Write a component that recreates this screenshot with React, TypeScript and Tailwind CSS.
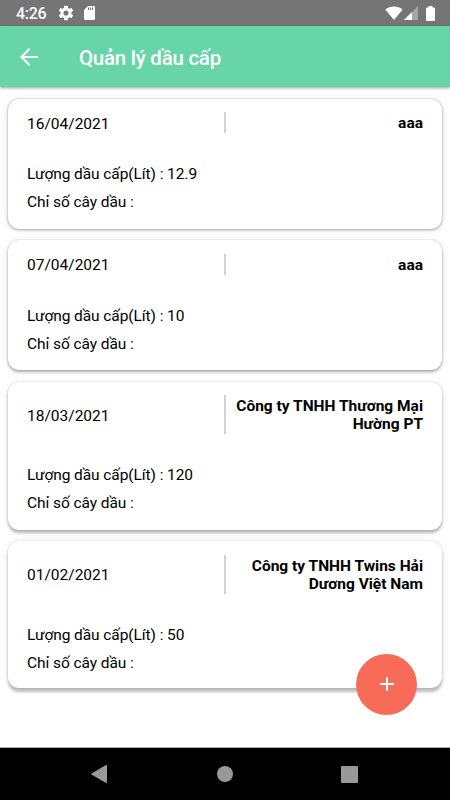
import clsx from 'clsx';

type Refill = {
  date: string;
  company: string;
  liters: string;
  index: string;
  className: string;
};

const refills: Refill[] = [
  { date: '16/04/2021', company: 'aaa', liters: '12.9', index: '', className: 'h-[130px] shadow-[0_0_1px_rgba(0,0,0,0.3),0_1px_3px_rgba(0,0,0,0.3),0_0_8px_rgba(0,0,0,0.08)]' },
  { date: '07/04/2021', company: 'aaa', liters: '10', index: '', className: 'h-[130px] shadow-[0_0_1px_rgba(0,0,0,0.25),0_2px_3px_rgba(0,0,0,0.3),0_0_8px_rgba(0,0,0,0.08)]' },
  { date: '18/03/2021', company: 'Công ty TNHH Thương Mại Hường PT', liters: '120', index: '', className: 'h-[148px] shadow-[0_0_1px_rgba(0,0,0,0.25),0_3px_3px_rgba(0,0,0,0.26),0_0_8px_rgba(0,0,0,0.08)]' },
  { date: '01/02/2021', company: 'Công ty TNHH Twins Hải Dương Việt Nam', liters: '50', index: '', className: 'h-[147px] shadow-[0_0_1px_rgba(0,0,0,0.25),0_4px_3px_rgba(0,0,0,0.24),0_0_8px_rgba(0,0,0,0.08)]' },
];

const StatusBar = () => (
  <div className="flex h-[26px] shrink-0 items-center bg-[#757575] pl-4 pr-[15px] text-white">
    <span className="w-[42px] pt-[2px] text-[16px] font-medium leading-[26px] tracking-[-0.3px]">4:26</span>
    <svg className="h-4 w-4" viewBox="1 1 22 22" fill="currentColor">
      <path d="M19.43 12.98c.04-.32.07-.64.07-.98s-.03-.66-.07-.98l2.11-1.65c.19-.15.24-.42.12-.64l-2-3.46c-.12-.22-.39-.3-.61-.22l-2.49 1c-.52-.4-1.08-.73-1.69-.98l-.38-2.65A.49.49 0 0 0 14 2h-4c-.25 0-.46.18-.49.42l-.38 2.65c-.61.25-1.17.59-1.69.98l-2.49-1c-.23-.09-.49 0-.61.22l-2 3.46c-.13.22-.07.49.12.64l2.11 1.65c-.04.32-.07.65-.07.98s.03.66.07.98l-2.11 1.65c-.19.15-.24.42-.12.64l2 3.46c.12.22.39.3.61.22l2.49-1c.52.4 1.08.73 1.69.98l.38 2.65c.03.24.24.42.49.42h4c.25 0 .46-.18.49-.42l.38-2.65c.61-.25 1.17-.59 1.69-.98l2.49 1c.23.09.49 0 .61-.22l2-3.46c.12-.22.07-.49-.12-.64l-2.11-1.65zM12 15.5A3.5 3.5 0 1 1 12 8.500a3.500 3.500 0 0 1 0 7z" />
    </svg>
    <svg className="ml-[10px] h-[14px] w-[11px]" viewBox="0 0 11 14">
      <path d="M4 0H10a1 1 0 0 1 1 1V13a1 1 0 0 1-1 1H1a1 1 0 0 1-1-1V4z" fill="currentColor" />
      <path d="M4.500 1.500V4M6.500 1.500V4M8.500 1.500V4" stroke="#757575" strokeWidth="1" />
    </svg>
    <div className="ml-auto flex items-center">
      <svg className="h-[14px] w-[18px]" viewBox="0 0 18 14" fill="currentColor">
        <path d="M.3 3.500C5 -.5 13 -.5 17.700 3.500L9 14z" />
      </svg>
      <svg className="ml-[1px] h-[14px] w-[14px]" viewBox="0 0 14 14" fill="currentColor">
        <path d="M14 0V14H0z" opacity=".35" />
        <path d="M8 6V14H0z" />
      </svg>
      <svg className="ml-2 h-[15px] w-[9px]" viewBox="0 0 9 15" fill="currentColor">
        <path d="M2.500 0h4v1.500H8a1 1 0 0 1 1 1V14a1 1 0 0 1-1 1H1a1 1 0 0 1-1-1V2.500a1 1 0 0 1 1-1h1.500z" />
      </svg>
    </div>
  </div>
);

const Header = () => (
  <header className="z-10 flex h-[61px] shrink-0 items-center bg-[#67d5a8] pl-5 text-white shadow-[0_1px_3px_rgba(0,0,0,0.4)]">
    <button aria-label="Back">
      <svg className="h-[18px] w-[18px]" viewBox="0 0 18 18" fill="none" stroke="currentColor" strokeWidth="2">
        <path d="M9.600 .8L1.400 9l8.200 8.200M1.600 9H18" />
      </svg>
    </button>
    <h1 className="ml-[41px] pt-[2px] text-[20.500px] font-medium leading-6 tracking-[-0.26px]">Quản lý dầu cấp</h1>
  </header>
);

const RefillCard = ({ date, company, liters, index, className }: Refill) => (
  <article className={clsx('rounded-[11px] bg-white px-[19px] pt-[13.500px]', className)}>
    <div className="flex items-center">
      <span className="w-[197px] pt-[2px] leading-[18px]">{date}</span>
      <div className="flex flex-1 justify-end border-l-2 border-[#d3d3d3] pb-[1px] pt-[2px] text-right font-bold leading-[18px]">
        <p className="w-[192px]">{company}</p>
      </div>
    </div>
    <div className="mt-[27px] leading-7 tracking-[-0.08px]">
      <p>Lượng dầu cấp(Lít) : {liters}</p>
      <p>Chỉ số cây dầu : {index}</p>
    </div>
  </article>
);

const NavBar = () => (
  <nav className="flex h-[53px] shrink-0 items-center justify-between border-t border-[#aaa] bg-black pl-[91px] pr-[92px] text-[#999]">
    <svg className="h-[18px] w-4" viewBox="0 0 16 18" fill="currentColor">
      <path d="M15 0a1 1 0 0 1 1 1V17a1 1 0 0 1-1 1L.5 9.600Q-.3 9 .5 8.400z" />
    </svg>
    <div className="ml-[1px] h-4 w-4 rounded-full bg-current" />
    <div className="h-[17px] w-[17px] rounded-[1px] bg-current" />
  </nav>
);

export default function App() {
  return (
    <div className="relative flex h-[800px] w-[450px] flex-col overflow-hidden bg-white font-[Roboto,sans-serif] text-[15.500px] text-black">
      <StatusBar />
      <Header />
      <main className="flex flex-1 flex-col gap-[11.600px] px-2 pt-[11.600px]">
        {refills.map((refill) => (
          <RefillCard key={refill.date} {...refill} />
        ))}
      </main>
      <NavBar />
      <button
        aria-label="Add"
        className="absolute bottom-[85.500px] right-[33px] flex h-[61px] w-[61px] items-center justify-center rounded-full bg-[#f76b57] text-white"
      >
        <svg className="mb-[1px] h-[14px] w-[14px]" viewBox="0 0 14 14" stroke="currentColor" strokeWidth="2">
          <path d="M7 0V14M0 7H14" />
        </svg>
      </button>
    </div>
  );
}
